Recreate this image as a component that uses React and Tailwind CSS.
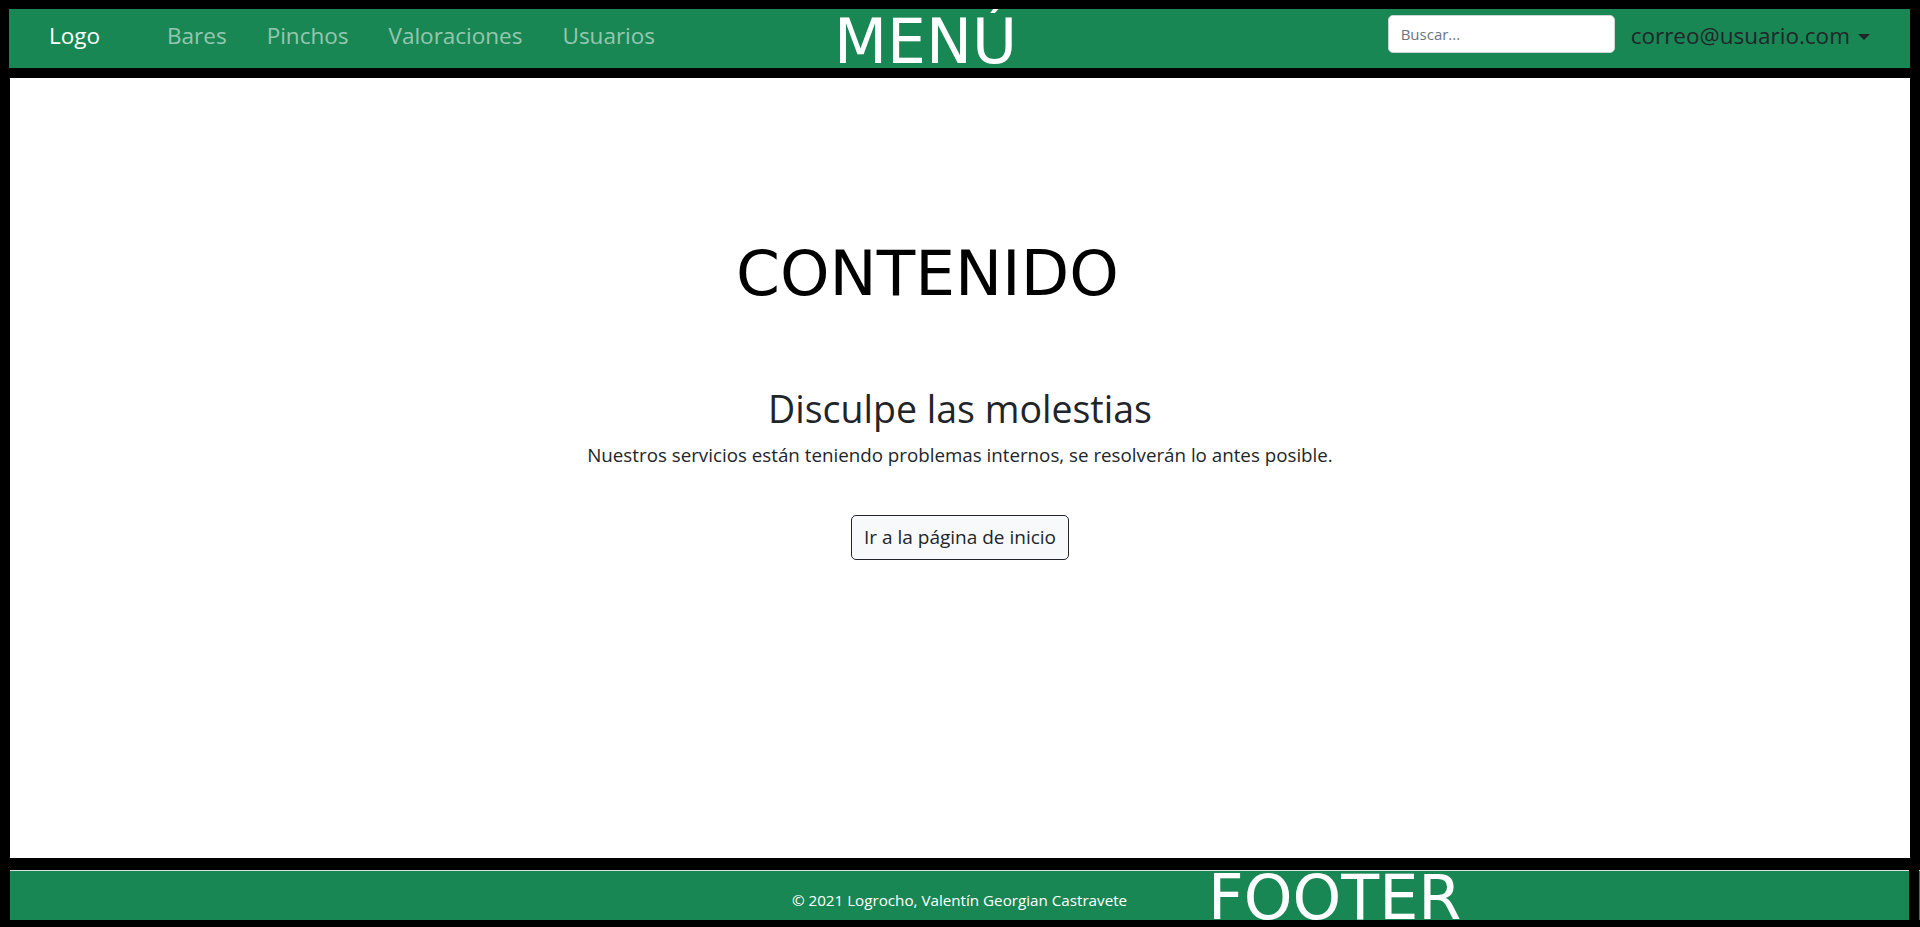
export default function App() {
  const links = ['Bares', 'Pinchos', 'Valoraciones', 'Usuarios'];

  return (
    <div className="min-h-screen bg-black font-['Open_Sans','Noto_Sans',sans-serif] text-[#212529]">
      {/* cabecera */}
      <div className="pt-[9px] pl-[9px] pr-[10px]">
        <header className="relative h-[59px] overflow-hidden bg-[#198754]">
          <div className="flex h-[50px] items-center px-10">
            <a href="#" className="pt-[5px] text-[22.5px] leading-none text-white">Logo</a>
            <nav className="ml-[67px] flex gap-[40px] pt-[5px]">
              {links.map(link => (
                <a key={link} href="#" className="text-[22.5px] leading-none text-[rgba(255,255,255,0.55)]">
                  {link}
                </a>
              ))}
            </nav>
            <div className="ml-auto flex items-center">
              <input
                type="text"
                placeholder="Buscar..."
                className="h-[38px] w-[227px] rounded-[5px] border border-[#ced4da] bg-white px-[12px] text-[15px] text-[#212529] placeholder:text-[#6c757d] outline-none"
              />
              <a href="#" className="ml-[16px] flex items-center pt-[5px] text-[22.5px] leading-none text-[#212529]">
                correo@usuario.com
                <span className="ml-[8px] inline-block h-0 w-0 border-l-[6px] border-r-[6px] border-t-[6px] border-l-transparent border-r-transparent border-t-[#212529]"></span>
              </a>
            </div>
          </div>
          <span className="absolute left-[825px] top-[3px] font-['DejaVu_Sans',sans-serif] text-[61.5px] leading-none text-white">
            MENÚ
          </span>
        </header>
      </div>

      {/* contenido */}
      <div className="mt-[10px] ml-[10px] mr-[10px]">
        <main className="relative h-[780px] bg-white">
          <span className="absolute left-[726px] top-[164px] font-['DejaVu_Sans',sans-serif] text-[63px] leading-none text-black">
            CONTENIDO
          </span>
          <div className="flex flex-col items-center pt-[308px] text-center">
            <h1 className="text-[37.5px] leading-[1.2] font-normal">Disculpe las molestias</h1>
            <p className="mt-[10px] text-[18.75px] leading-[27px]">
              Nuestros servicios están teniendo problemas internos, se resolverán lo antes posible.
            </p>
            <button className="mt-[47px] rounded-[5px] border border-[#212529] bg-[#f8f9fa] px-[12px] py-[8px] text-[19px] leading-[27px] text-[#212529]">
              Ir a la página de inicio
            </button>
          </div>
        </main>
      </div>

      {/* pie */}
      <div className="mt-[12px] flex h-[50px] pl-[10px]">
        <footer className="relative flex flex-1 items-center justify-center overflow-hidden border-t border-[#dee2e6] bg-[#198754]">
          <span className="pt-[10px] text-[15.2px] text-white">© 2021 Logrocho, Valentín Georgian Castravete</span>
          <span className="absolute left-[1198px] top-[-4px] font-['DejaVu_Sans',sans-serif] text-[62px] leading-none text-white">
            FOOTER
          </span>
        </footer>
        <div className="w-[10px]"></div>
        <div className="w-[1px] border-t border-[#dee2e6] bg-[#198754]"></div>
      </div>
    </div>
  );
}
